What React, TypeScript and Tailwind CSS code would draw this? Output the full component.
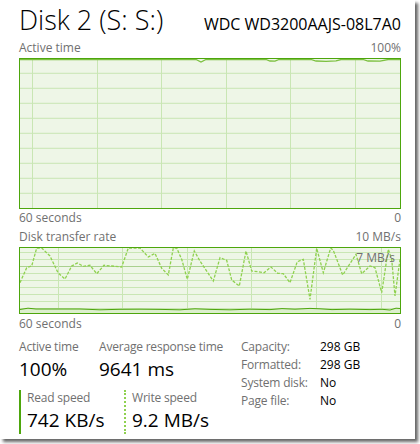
const font = { fontFamily: '"Open Sans", "Noto Sans", sans-serif' }

const writePts: [number, number][] = [
  [0, 34.7], [6.7, 19.7], [11.7, 18], [16.7, 0], [21.7, 0], [30, 8], [38, 24.7], [45, 31],
  [51.7, 18], [57.3, 15], [63.3, 18.3], [70, 17.3], [76.7, 25.7], [84, 17.3], [91.7, 18],
  [101.7, 19], [108.3, 0], [120, 0], [128.3, 9], [135, 5.3], [141.7, 20.3], [148.3, 27],
  [153.3, 0], [156.7, 0], [161.7, 11.3], [167.3, 31.3], [174.3, 3], [180, 13], [190, 28],
  [193.3, 33], [200, 9.7], [206.7, 12.3], [211.7, 32], [219.3, 38], [226, 3], [231.7, 23],
  [238.3, 23.7], [244, 24.7], [251, 19], [257.7, 25.3], [263.3, 25.7], [270, 34.7],
  [277.3, 13.7], [283.3, 11.3], [290, 51.3], [296.7, 0.3], [303.3, 24.7], [310.7, 0],
  [313.3, 2.3], [322.7, 27], [336, 6.3], [341.7, 25.7], [350, 18], [355, 19.7], [361.7, 44.7],
  [368.3, 1.3], [371.7, 11.3], [375, 48], [380, 11.3],
]

const readPts: [number, number][] = [
  [0, 61.5], [8, 60.2], [16, 61], [40, 61], [60, 61], [80, 61.8], [100, 61.3], [120, 61.2],
  [140, 61.4], [160, 61.8], [175, 60.8], [190, 61.4], [210, 61.8], [230, 61.2], [250, 61.6],
  [262, 60.6], [275, 61.2], [290, 60.4], [300, 60.8], [312, 61.6], [330, 61.2], [350, 61.6],
  [362, 61.3], [370, 62], [376, 60.2], [380, 60.5],
]

const activePts: [number, number][] = [
  [0, 0.5], [176, 0.5], [181, 3], [186, 0.5], [246, 0.5], [250, 2], [255, 2.2], [259, 0.5],
  [291, 0.5], [296, 2], [306, 2.3], [316, 1.8], [321, 0.5], [343, 0.5], [348, 2], [360, 2.2],
  [368, 0.5], [380, 0.5],
]

const toStr = (p: [number, number][]) => p.map(([x, y]) => `${x},${y}`).join(" ")

function ActiveChart() {
  const rows = [14.3, 29.3, 44.3, 59.3, 74.3, 89.3, 104.3, 119.3, 134.3]
  const cols = [12, 77, 141, 206, 270, 335]
  return (
    <div className="h-[151px] w-[382px] border border-[#4da60c] bg-[#eef6e7]">
      <svg width="380" height="149" viewBox="0 0 380 149" className="block">
        {rows.map((y) => (
          <line key={y} x1="0" x2="380" y1={y} y2={y} stroke="#c9e6b4" strokeWidth="1" />
        ))}
        {cols.map((x) => (
          <line key={x} x1={x + 0.5} x2={x + 0.5} y1="0" y2="149" stroke="#c9e6b4" strokeWidth="1" />
        ))}
        <polyline points={toStr(activePts)} fill="none" stroke="#7cc040" strokeWidth="1.3" />
      </svg>
    </div>
  )
}

function TransferChart() {
  const rows = [4.5, 11.5, 18.5, 25.5, 32.5, 39.5, 46.5, 53.5, 60.5]
  const cols = [38, 102, 167, 231, 296, 361]
  return (
    <div className="relative h-[67px] w-[382px] border border-[#4da60c] bg-[#eef6e7]">
      <svg width="380" height="65" viewBox="0 0 380 65" className="block">
        {rows.map((y) => (
          <line
            key={y}
            x1="0"
            x2="380"
            y1={y}
            y2={y}
            stroke={y === 18.5 ? "#a9d08e" : "#c9e6b4"}
            strokeWidth="1"
          />
        ))}
        {cols.map((x) => (
          <line key={x} x1={x + 0.5} x2={x + 0.5} y1="0" y2="65" stroke="#c9e6b4" strokeWidth="1" />
        ))}
        <polygon points={`0,65 ${toStr(readPts)} 380,65`} fill="#dcefcd" />
        <polyline points={toStr(readPts)} fill="none" stroke="#4da60c" strokeWidth="1" />
        <polyline
          points={toStr(writePts)}
          fill="none"
          stroke="#8fd14f"
          strokeWidth="1.3"
          strokeDasharray="3 1.5"
        />
      </svg>
      <span className="absolute right-[5px] top-[4px] text-[12px] leading-none text-[#707070]">7 MB/s</span>
    </div>
  )
}

function Stat({ label, value }: { label: string; value: string }) {
  return (
    <div className="flex flex-col">
      <span className="text-[12px] leading-[16px] tracking-[-0.2px] text-[#707070]">{label}</span>
      <span className="text-[19px] leading-[28px] text-black">{value}</span>
    </div>
  )
}

function Prop({ label, value }: { label: string; value: string }) {
  return (
    <div className="flex h-[18px] items-center text-[12px]">
      <span className="w-[79px] tracking-[-0.2px] text-[#707070]">{label}</span>
      <span className="text-black">{value}</span>
    </div>
  )
}

export default function App() {
  return (
    <div className="h-[444px] w-[420px] bg-white" style={font}>
      <div className="h-[439px] w-[415px] bg-white pl-[19px] pr-[14px] shadow-[3px_3px_3px_rgba(0,0,0,0.6)]">
        {/* Header */}
        <div className="flex h-[40px] items-end justify-between pb-[7px]">
          <span className="text-[27px] font-light leading-none text-black">Disk 2 (S: S:)</span>
          <span className="pb-[1px] text-[16px] leading-none text-black">WDC WD3200AAJS-08L7A0</span>
        </div>
        <div className="flex h-[16px] items-center justify-between text-[12px] text-[#707070]">
          <span>Active time</span>
          <span>100%</span>
        </div>
        <div className="pt-[2px]">
          <ActiveChart />
        </div>
        <div className="flex h-[18px] items-center justify-between text-[12px] text-[#707070]">
          <span>60 seconds</span>
          <span>0</span>
        </div>
        <div className="flex h-[20px] items-center justify-between text-[12px] text-[#707070]">
          <span>Disk transfer rate</span>
          <span>10 MB/s</span>
        </div>
        <TransferChart />
        <div className="flex h-[19px] items-center justify-between text-[12px] text-[#707070]">
          <span>60 seconds</span>
          <span>0</span>
        </div>

        {/* Stats */}
        <div className="flex pt-[6px]">
          <div className="flex w-[222px] flex-col">
            <div className="flex">
              <div className="w-[80px]">
                <Stat label="Active time" value="100%" />
              </div>
              <Stat label="Average response time" value="9641 ms" />
            </div>
            <div className="mt-[7px] flex">
              <div className="flex w-[105px] border-l-2 border-[#4da60c] pl-[6px]">
                <Stat label="Read speed" value="742 KB/s" />
              </div>
              <div className="flex border-l-2 border-dotted border-[#8fd14f] pl-[6px]">
                <Stat label="Write speed" value="9.2 MB/s" />
              </div>
            </div>
          </div>
          <div className="-mt-[1px] flex flex-col">
            <Prop label="Capacity:" value="298 GB" />
            <Prop label="Formatted:" value="298 GB" />
            <Prop label="System disk:" value="No" />
            <Prop label="Page file:" value="No" />
          </div>
        </div>
      </div>
    </div>
  )
}
